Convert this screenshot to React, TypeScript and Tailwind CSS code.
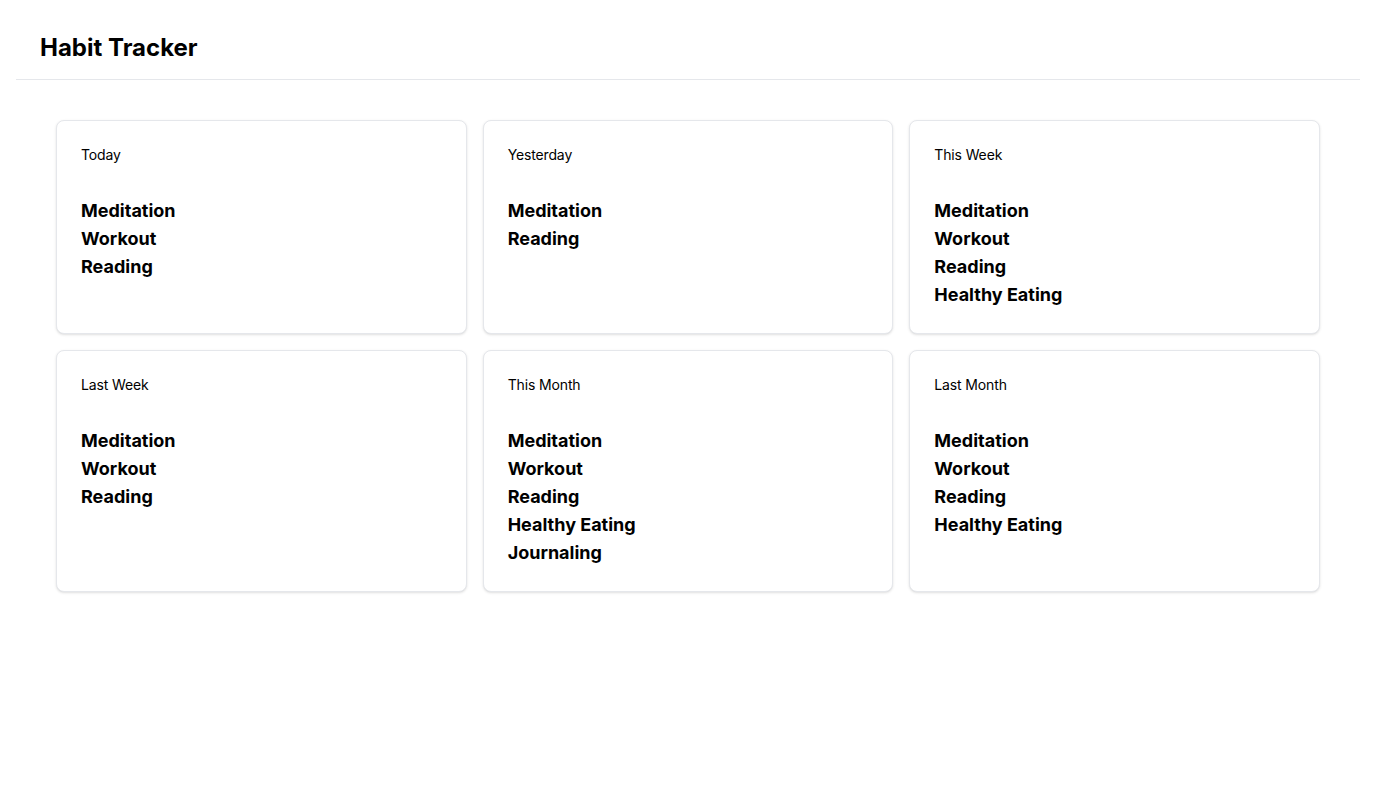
import React from "react";

const data: { title: string; habits: string[] }[] = [
  { title: "Today", habits: ["Meditation", "Workout", "Reading"] },
  { title: "Yesterday", habits: ["Meditation", "Reading"] },
  { title: "This Week", habits: ["Meditation", "Workout", "Reading", "Healthy Eating"] },
  { title: "Last Week", habits: ["Meditation", "Workout", "Reading"] },
  { title: "This Month", habits: ["Meditation", "Workout", "Reading", "Healthy Eating", "Journaling"] },
  { title: "Last Month", habits: ["Meditation", "Workout", "Reading", "Healthy Eating"] },
];

export default function App() {
  return (
    <div className="min-h-screen bg-white px-4 pt-4 text-black" style={{ fontFamily: "Inter, 'Noto Sans', sans-serif" }}>
      <header className="border-b border-gray-200 px-6 pt-4 pb-[15px]">
        <h1 className="text-2xl font-bold leading-8">Habit Tracker</h1>
      </header>
      <main className="p-10">
        <div className="grid grid-cols-3 gap-4">
          {data.map((c) => (
            <div key={c.title} className="rounded-lg border border-gray-200 bg-white p-6 shadow-sm">
              <div className="text-sm leading-5 tracking-[-0.01em]">{c.title}</div>
              <ul className="mt-8">
                {c.habits.map((h) => (
                  <li key={h} className="text-lg font-bold leading-7">{h}</li>
                ))}
              </ul>
            </div>
          ))}
        </div>
      </main>
    </div>
  );
}
